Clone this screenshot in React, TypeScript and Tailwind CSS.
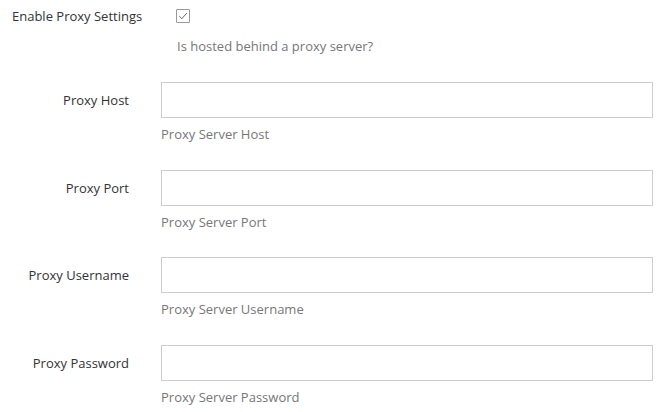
import React from "react";

const fields = [
  { label: "Proxy Host", help: "Proxy Server Host", gap: "mb-[27px]" },
  { label: "Proxy Port", help: "Proxy Server Port", gap: "mb-[26px]" },
  { label: "Proxy Username", help: "Proxy Server Username", gap: "mb-[27px]" },
  { label: "Proxy Password", help: "Proxy Server Password", gap: "mb-0" },
];

export default function App() {
  return (
    <div className="h-[412px] overflow-hidden w-[672px] bg-white text-[13px] text-[#333] font-['Open_Sans',sans-serif]">
      {/* Enable row */}
      <div className="pt-[6px] flex items-center h-[26px]">
        <span className="pl-[12px] w-[176px] leading-[18px]">Enable Proxy Settings</span>
        <span className="w-[14px] h-[14px] border border-[#999] rounded-[1px] flex items-center justify-center bg-white">
          <svg viewBox="0 0 12 12" className="w-[10px] h-[10px]" fill="none" stroke="#444" strokeWidth={1}>
            <path d="M1.5 6.2 L4.6 9.2 L10.6 2.5" />
          </svg>
        </span>
      </div>
      <p className="ml-[177px] mt-[11px] leading-[18px] text-[#777]">Is hosted behind a proxy server?</p>

      <div className="mt-[27px] flex flex-col">
        {fields.map((f) => (
          <div key={f.label} className={f.gap}>
            <div className="flex items-center">
              <label className="w-[129px] text-right leading-[18px] shrink-0">{f.label}</label>
              <input
                type="text"
                className="ml-[32px] w-[492px] h-[36px] border border-[#ccc] bg-white outline-none px-2"
              />
            </div>
            <p className="ml-[161px] mt-[7px] leading-[18px] text-[#777]">{f.help}</p>
          </div>
        ))}
      </div>
    </div>
  );
}
